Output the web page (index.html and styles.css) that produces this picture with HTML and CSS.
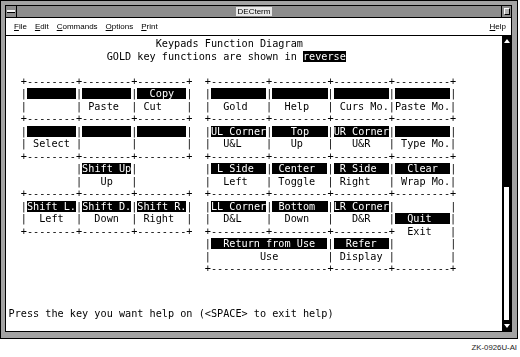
FILE: index.html
```html
<!DOCTYPE html>
<html lang="en">
<head>
    <meta charset="UTF-8">
    <meta name="viewport" content="width=device-width, initial-scale=1.0">
    <title>DECterm - Keypads Function Diagram</title>
    <link rel="stylesheet" href="styles.css">
</head>
<body>
    <div class="page">
        <div class="window">
            <!-- Title bar -->
            <div class="titlebar">
                <div class="win-menu"><span></span></div>
                <div class="title"><span>DECterm</span></div>
                <div class="resize"><span></span></div>
            </div>

            <div class="client">
                <!-- Menu bar -->
                <div class="menubar">
                    <span><u>F</u>ile</span>
                    <span><u>E</u>dit</span>
                    <span><u>C</u>ommands</span>
                    <span><u>O</u>ptions</span>
                    <span><u>P</u>rint</span>
                    <span class="help"><u>H</u>elp</span>
                </div>

                <!-- Terminal screen -->
                <div class="term">
                    <div class="screen">
<pre>                        Keypads Function Diagram
                GOLD key functions are shown in <span class="rev">reverse</span>

  +--------+--------+--------+  +---------+---------+---------+---------+
  |<span class="rev">        </span>|<span class="rev">        </span>|<span class="rev">  Copy  </span>|  |<span class="rev">         </span>|<span class="rev">         </span>|<span class="rev">         </span>|<span class="rev">         </span>|
  |        | Paste  | Cut    |  |  Gold   |  Help   | Curs Mo.|Paste Mo.|
  +--------+--------+--------+  +---------+---------+---------+---------+
  |<span class="rev">        </span>|<span class="rev">        </span>|<span class="rev">        </span>|  |<span class="rev">UL Corner</span>|<span class="rev">   Top   </span>|<span class="rev">UR Corner</span>|<span class="rev">         </span>|
  | Select |        |        |  |  U&amp;L    |   Up    |   U&amp;R   | Type Mo.|
  +--------+--------+--------+  +---------+---------+---------+---------+
           |<span class="rev">Shift Up</span>|           |<span class="rev"> L Side  </span>|<span class="rev"> Center  </span>|<span class="rev"> R Side  </span>|<span class="rev">  Clear  </span>|
           |   Up   |           |  Left   | Toggle  | Right   | Wrap Mo.|
  +--------+--------+--------+  +---------+---------+---------+---------+
  |<span class="rev">Shift L.</span>|<span class="rev">Shift D.</span>|<span class="rev">Shift R.</span>|  |<span class="rev">LL Corner</span>|<span class="rev"> Bottom  </span>|<span class="rev">LR Corner</span>|         |
  |  Left  |  Down  | Right  |  |  D&amp;L    |  Down   |   D&amp;R   |<span class="rev">  Quit   </span>|
  +--------+--------+--------+  +---------+---------+---------+  Exit   |
                                |<span class="rev">  Return from Use  </span>|<span class="rev">  Refer  </span>|         |
                                |        Use        | Display |         |
                                +-------------------+---------+---------+</pre>
                        <div class="status">Press the key you want help on (&lt;SPACE&gt; to exit help)</div>
                    </div>

                    <!-- Scroll bar -->
                    <div class="scrollbar">
                        <div class="arrow-up"></div>
                        <div class="slider"></div>
                        <div class="arrow-down"><span></span></div>
                    </div>
                </div>
            </div>
        </div>

        <div class="figure-id">ZK-0926U-AI</div>
    </div>
</body>
</html>
```

FILE: styles.css
```css
* {
    margin: 0;
    padding: 0;
    box-sizing: border-box;
}

body {
    background-color: #fff;
    font-family: "Liberation Sans", Arial, sans-serif;
}

.page {
    width: 518px;
}

/* Window frame */
.window {
    width: 518px;
    height: 339px;
    border: 1px solid #000;
    background-color: #a3a3a3;
    padding: 4px 5px 6px 4px;
    display: flex;
    flex-direction: column;
    filter: grayscale(1);
}

.titlebar {
    height: 12px;
    border: 1px solid #000;
    border-bottom: none;
    background-color: #8d8d8d;
    display: flex;
}

.win-menu {
    width: 11px;
    border-right: 1px solid #000;
    display: flex;
    align-items: center;
    justify-content: center;
}

.win-menu span {
    width: 8px;
    height: 3px;
    background-color: #f2f2f2;
    border-bottom: 1px solid #000;
}

.title {
    flex: 1;
    display: flex;
    justify-content: center;
    align-items: center;
}

.title span {
    margin-right: 10px;
    padding: 0 2px;
    background-color: #e8e8e8;
    font-size: 8px;
    line-height: 9px;
    color: #000;
}

.resize {
    width: 10px;
    border-left: 1px solid #000;
    display: flex;
    align-items: center;
    justify-content: center;
}

.resize span {
    width: 6px;
    height: 7px;
    background-color: #b5b5b5;
    border: 1px solid;
    border-color: #fff #000 #000 #fff;
}

.client {
    flex: 1;
    border: 1px solid #000;
    background-color: #fff;
    display: flex;
    flex-direction: column;
}

/* Menu bar */
.menubar {
    height: 18px;
    border-bottom: 1px solid #000;
    display: flex;
    align-items: center;
    gap: 8px;
    padding: 0 5px 0 8px;
    font-size: 8px;
    color: #000;
}

.menubar .help {
    margin-left: auto;
}

/* Terminal */
.term {
    flex: 1;
    display: flex;
}

.screen {
    flex: 1;
    padding: 2px 0 0 2.5px;
    font-family: "DejaVu Sans Mono", monospace;
    font-size: 10.2px;
    line-height: 12.5px;
    color: #000;
}

.screen pre {
    font: inherit;
}

.rev {
    background-color: #000;
    color: #fff;
}

.status {
    margin-top: 32px;
    white-space: pre;
}

/* Scroll bar */
.scrollbar {
    width: 9px;
    background-color: #000;
    display: flex;
    flex-direction: column;
    align-items: center;
}

.arrow-up {
    margin-top: 3px;
    width: 0;
    height: 0;
    border-left: 3px solid transparent;
    border-right: 3px solid transparent;
    border-bottom: 4px solid #fff;
}

.slider {
    margin-top: auto;
    width: 5px;
    height: 133px;
    background-color: #fff;
}

.arrow-down {
    width: 9px;
    height: 10px;
    margin-top: 1px;
    display: flex;
    align-items: center;
    justify-content: center;
}

.arrow-down span {
    width: 0;
    height: 0;
    border-left: 3px solid transparent;
    border-right: 3px solid transparent;
    border-top: 4px solid #fff;
}

.figure-id {
    margin-top: 4px;
    padding-right: 1px;
    text-align: right;
    font-size: 7.8px;
    line-height: 10px;
    color: #222;
}
```
